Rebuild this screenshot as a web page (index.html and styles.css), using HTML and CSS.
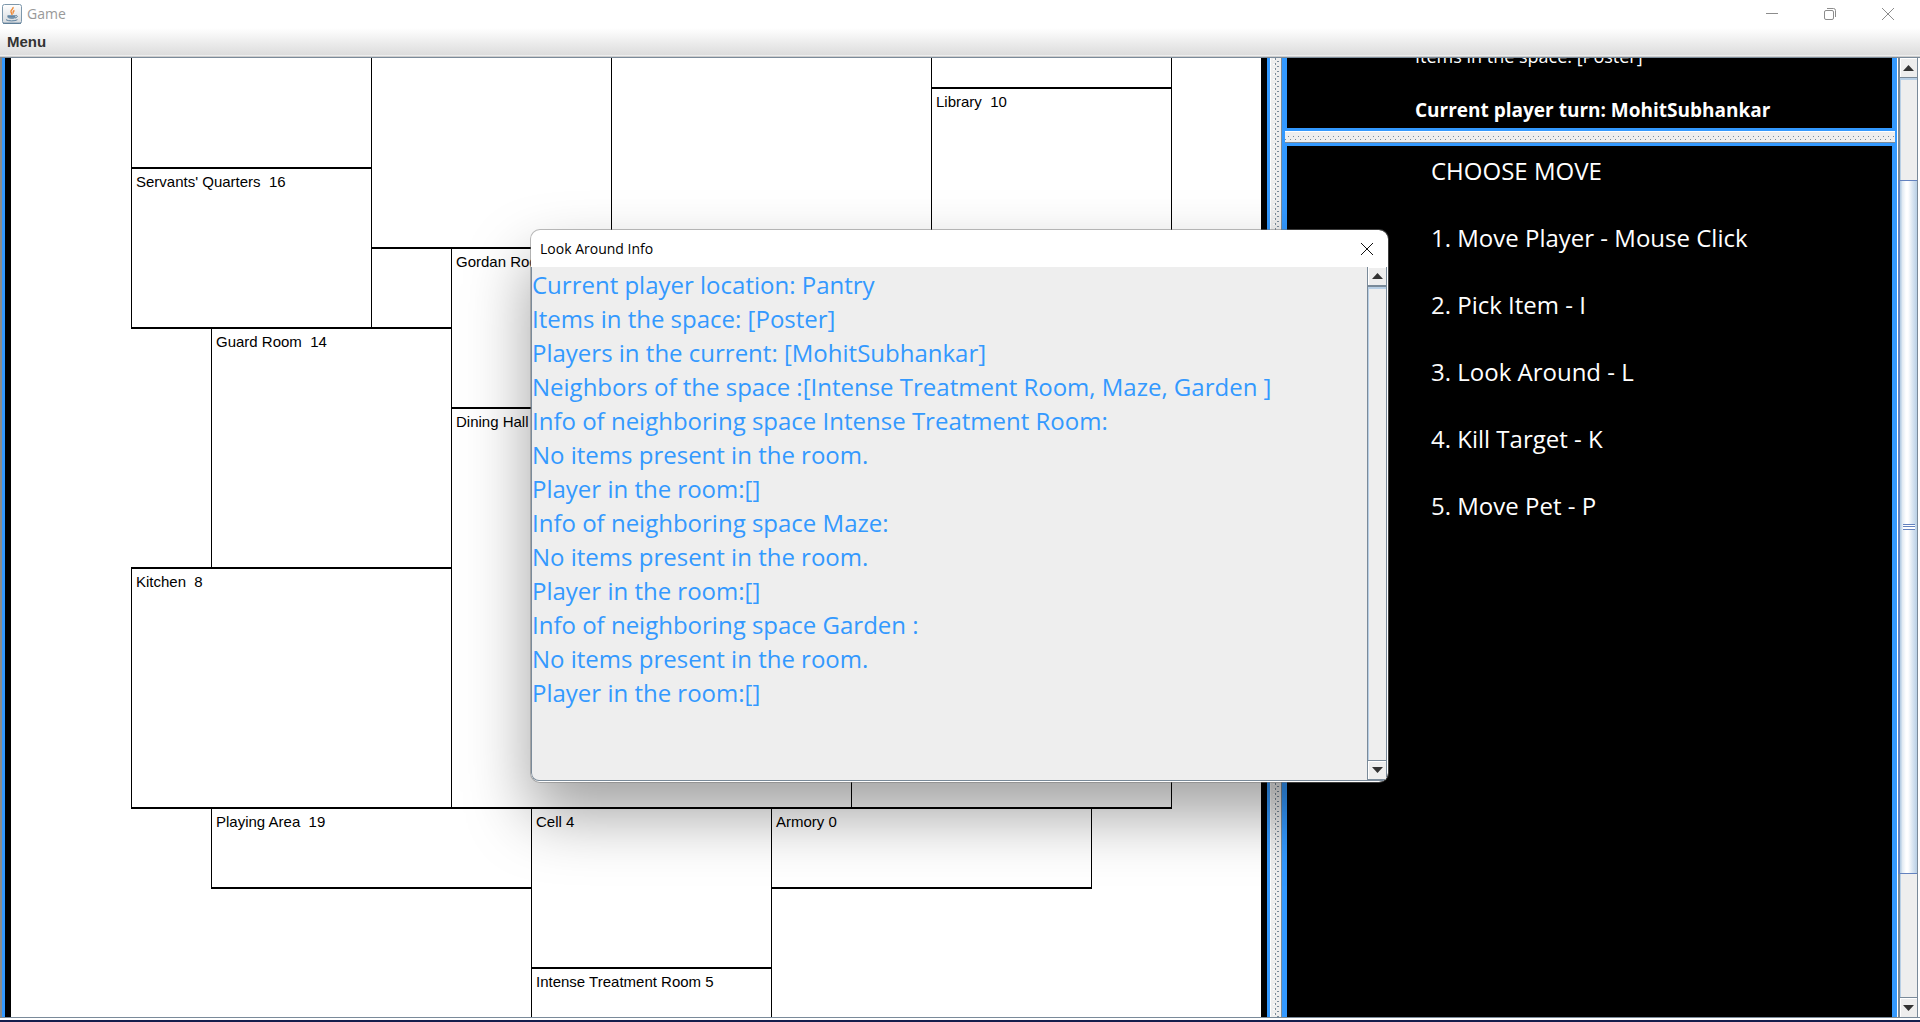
FILE: index.html
```html
<!DOCTYPE html>
<html lang="en">
<head>
<meta charset="utf-8">
<title>Game</title>
<link rel="stylesheet" href="styles.css">
</head>
<body>
<div class="window">
  <header class="titlebar">
    <svg class="java-icon" viewBox="0 0 20 20" width="20" height="20" aria-hidden="true">
      <defs><linearGradient id="tile" x1="0" y1="0" x2="0" y2="1"><stop offset="0" stop-color="#fff"/><stop offset="1" stop-color="#d5d9dd"/></linearGradient></defs>
      <rect x=".5" y=".5" width="19" height="19" rx="2" fill="url(#tile)" stroke="#7d97ab"/>
      <path d="M1 19.2h18" stroke="#4f7390"/>
      <path d="M11 3c1 2-3 3-2 5 .4 1 1.200 1.500 1 3M12.500 6.500c-2 1-1.500 2 -1 3" fill="none" stroke="#ee8a3a" stroke-width="1.400"/>
      <path d="M5.500 11h8v1.500c0 2-1.500 2.500-4 2.500s-4-1-4-2.500z" fill="#7f9bb3"/>
      <path d="M13.500 11.500c2.500-.5 2.500 2-.5 2.500M4 15.700c2 1.600 9 1.600 11.500 0M5.500 12.800h7.500" fill="none" stroke="#5b7f9d"/>
    </svg>
    <span class="titlebar__text">Game</span>
    <div class="titlebar__buttons">
      <button class="caption-button" aria-label="Minimize"><svg viewBox="0 0 14 14" width="14" height="14"><path d="M1 6.500h12"/></svg></button>
      <button class="caption-button" aria-label="Restore"><svg viewBox="0 0 14 14" width="14" height="14"><rect x="1.500" y="3.500" width="9" height="9" rx="1.500"/><path d="M4 1.500h6.500a2 2 0 0 1 2 2V10"/></svg></button>
      <button class="caption-button" aria-label="Close"><svg viewBox="0 0 14 14" width="14" height="14"><path d="M1 1l12 12M13 1L1 13"/></svg></button>
    </div>
  </header>
  <nav class="menubar"><button class="menubar__item">Menu</button></nav>

  <main class="workspace">
    <section class="map" aria-label="World map">
      <div class="board">
        <div class="room room--open a1"></div>
        <div class="room room--open a2"></div>
        <div class="room room--open a3"></div>
        <div class="room passage"></div>
        <div class="room library">Library  10</div>
        <div class="room servants">Servants' Quarters  16</div>
        <div class="room gordan">Gordan Room</div>
        <div class="room guard">Guard Room  14</div>
        <div class="room dining">Dining Hall</div>
        <div class="room pantry"></div>
        <div class="room kitchen">Kitchen  8</div>
        <div class="room playing">Playing Area  19</div>
        <div class="room armory">Armory 0</div>
        <div class="room cell">Cell 4</div>
        <div class="room treatment">Intense Treatment Room 5</div>
      </div>
    </section>
    <div class="divider divider--vertical"></div>
    <aside class="side">
      <section class="status">
        <p>Items in the space: [Poster]</p>
        <p class="status__turn">Current player turn: MohitSubhankar</p>
      </section>
      <div class="divider divider--horizontal"></div>
      <section class="moves">
        <p>CHOOSE MOVE</p>
        <p>1. Move Player - Mouse Click</p>
        <p>2. Pick Item - I</p>
        <p>3. Look Around - L</p>
        <p>4. Kill Target - K</p>
        <p>5. Move Pet - P</p>
      </section>
    </aside>
    <div class="scrollbar">
      <button class="scrollbar__button" aria-label="Scroll up"><svg viewBox="0 0 11 6" width="11" height="6"><path d="M0 6L5.500 0 11 6z"/></svg></button>
      <div class="scrollbar__track">
        <div class="scrollbar__before"></div>
        <div class="scrollbar__thumb"><span class="grip"></span></div>
        <div class="scrollbar__after"></div>
      </div>
      <button class="scrollbar__button scrollbar__button--down" aria-label="Scroll down"><svg viewBox="0 0 11 6" width="11" height="6"><path d="M0 0L5.500 6 11 0z"/></svg></button>
    </div>
  </main>

  <div class="dialog" role="dialog" aria-labelledby="dialog-title">
    <div class="dialog__title">
      <span id="dialog-title">Look Around Info</span>
      <button class="dialog__close" aria-label="Close dialog"><svg viewBox="0 0 14 14" width="14" height="14"><path d="M1 1l12 12M13 1L1 13"/></svg></button>
    </div>
    <div class="dialog__body">
      <div class="dialog__text">
        <p>Current player location: Pantry</p>
        <p>Items in the space: [Poster]</p>
        <p>Players in the current: [MohitSubhankar]</p>
        <p>Neighbors of the space :[Intense Treatment Room, Maze, Garden ]</p>
        <p>Info of neighboring space Intense Treatment Room:</p>
        <p>No items present in the room.</p>
        <p>Player in the room:[]</p>
        <p>Info of neighboring space Maze:</p>
        <p>No items present in the room.</p>
        <p>Player in the room:[]</p>
        <p>Info of neighboring space Garden :</p>
        <p>No items present in the room.</p>
        <p>Player in the room:[]</p>
      </div>
      <div class="scrollbar scrollbar--dialog">
        <button class="scrollbar__button" aria-label="Scroll text up"><svg viewBox="0 0 11 6" width="11" height="6"><path d="M0 6L5.500 0 11 6z"/></svg></button>
        <div class="scrollbar__track"></div>
        <button class="scrollbar__button scrollbar__button--down" aria-label="Scroll text down"><svg viewBox="0 0 11 6" width="11" height="6"><path d="M0 0L5.500 6 11 0z"/></svg></button>
      </div>
    </div>
  </div>
</div>
</body>
</html>
```
FILE: styles.css
```css
:root {
  --blue: #3399ff;
  --steel: #7a8a99;
  --face: #eeeeee;
  --ui: "Open Sans", "Noto Sans", sans-serif;
}

* { box-sizing: border-box; }

body {
  margin: 0;
  font-family: var(--ui);
  background: #fff;
}

p { margin: 0; }

button {
  padding: 0;
  border: 0;
  background: none;
  font: inherit;
}

.window {
  position: relative;
  display: flex;
  flex-direction: column;
  height: 100vh;
  overflow: hidden;
  border-bottom: 2px solid #141c4c;
}

/* Title bar and menu */
.titlebar {
  display: flex;
  align-items: center;
  flex: none;
  height: 28px;
  padding: 0 3px 0 2px;
  gap: 5px;
}

.titlebar__text {
  font-size: 14px;
  line-height: 20px;
  color: #999;
}

.titlebar__buttons {
  display: flex;
  margin-left: auto;
}

.caption-button {
  display: grid;
  place-items: center;
  width: 58px;
  height: 28px;
}

.caption-button svg,
.dialog__close svg {
  fill: none;
  stroke: #8c8c8c;
}

.menubar {
  flex: none;
  height: 30px;
  border-bottom: 1px solid var(--steel);
  box-shadow: inset 0 -1px #ccc, inset 0 -2px #eee;
  background: linear-gradient(#fff, #dadada);
}

.menubar__item {
  height: 28px;
  padding-left: 7px;
  font: bold 15px/28px "Liberation Sans", Arial, sans-serif;
  color: #333;
}

/* Split layout */
.workspace {
  display: flex;
  flex: 1;
  min-height: 0;
  margin-bottom: 2px;
  padding-left: 2px;
  border-bottom: 1px solid var(--steel);
  background: linear-gradient(90deg, #8c8c8c 2px, #fff 2px);
}

.map {
  flex: 1250 1 0;
  min-width: 0;
  overflow: hidden;
  padding: 0 6px;
  border: solid var(--blue);
  border-width: 0 3px;
  background: #000;
}

.board {
  display: grid;
  grid-template-columns: repeat(13, 80px);
  grid-template-rows: 29px repeat(12, 80px);
  height: 100%;
  padding-left: 120px;
  overflow: hidden;
  background: #fff;
}

.room {
  margin: 0 -1px -2px 0;
  padding: 3px 4px;
  border: solid #000;
  border-width: 2px 1px;
  font: 15px/20px "Liberation Sans", Arial, sans-serif;
  white-space: pre;
  color: #000;
}

.room--open { border-top: 0; }

.a1 { grid-area: 1 / 1 / 3 / 4; }
.a2 { grid-area: 1 / 4 / 4 / 7; }
.a3 { grid-area: 1 / 11 / 2 / 14; }
.passage { grid-area: 4 / 4 / 5 / 5; }
.library { grid-area: 2 / 11 / 6 / 14; }
.servants { grid-area: 3 / 1 / 5 / 4; }
.gordan { grid-area: 4 / 5 / 6 / 8; }
.guard { grid-area: 5 / 2 / 8 / 5; }
.dining { grid-area: 6 / 5 / 11 / 10; }
.pantry { grid-area: 8 / 10 / 11 / 14; }
.kitchen { grid-area: 8 / 1 / 11 / 5; }
.playing { grid-area: 11 / 2 / 12 / 6; }
.armory { grid-area: 11 / 9 / 12 / 13; }
.cell { grid-area: 11 / 6 / 13 / 9; }
.treatment { grid-area: 13 / 6 / 14 / 9; }

.divider {
  flex: none;
  background-color: var(--face);
}

.divider--vertical {
  width: 11px;
  border-left: 1px solid #fff;
  background-image:
    linear-gradient(#fff 1px, transparent 1px),
    linear-gradient(var(--steel) 2px, transparent 2px),
    linear-gradient(var(--steel) 1px, transparent 1px);
  background-size: 2px 5px, 1px 5px, 2px 5px;
  background-position: 2px 1px, 4px 0, 6px 3px;
  background-repeat: repeat-y;
}

.divider--horizontal {
  height: 12px;
  border-top: 1px solid #fff;
  border-bottom: 1px solid var(--steel);
  background-image:
    linear-gradient(90deg, var(--steel) 1px, transparent 1px),
    linear-gradient(90deg, var(--steel) 1px, transparent 1px);
  background-size: 5px 1px;
  background-position: 3px 4px, 5px 7px;
  background-repeat: repeat-x;
}

.side {
  display: flex;
  flex-direction: column;
  flex: 610 1 0;
  min-width: 0;
  border-left: 1px solid var(--steel);
  border-right: 2px solid var(--blue);
  box-shadow: inset 3px 0 var(--blue);
  padding-left: 3px;
}

.status,
.moves {
  overflow: hidden;
  border: solid var(--blue);
  color: #fff;
  background: #000;
}

.status {
  display: flex;
  flex: 0 0 73px;
  flex-direction: column;
  justify-content: flex-end;
  gap: 27px;
  padding: 0 0 4px 128px;
  border-width: 0 3px 3px 2px;
  font-size: 18px;
  line-height: 27px;
}

.status__turn {
  font-size: 19px;
  font-weight: bold;
}

.moves {
  display: flex;
  flex: 1;
  flex-direction: column;
  gap: 33px;
  padding: 8px 0 0 144px;
  border-width: 3px 3px 0 2px;
  font-size: 24px;
  line-height: 34px;
}

/* Scroll bars */
.scrollbar {
  display: flex;
  flex: none;
  flex-direction: column;
  width: 23px;
  padding-right: 2px;
  border-left: 1px solid #fff;
}

.scrollbar__button {
  display: grid;
  flex: none;
  place-items: center;
  height: 20px;
  border: solid var(--steel);
  border-width: 0 1px 1px 2px;
  box-shadow: inset 1px 1px #fff;
  background: var(--face);
}

.scrollbar__button svg { fill: #333; }

.scrollbar__button--down { border-width: 1px 1px 0 2px; }

.scrollbar__track {
  display: flex;
  flex: 1;
  flex-direction: column;
  border: solid var(--steel);
  border-width: 0 1px 0 2px;
  background: var(--face);
  box-shadow: inset 1px 2px #b8cfe5;
}

.scrollbar__before { flex: 102; }
.scrollbar__after { flex: 123; }

.scrollbar__thumb {
  display: grid;
  flex: 695;
  place-items: center;
  margin-left: -2px;
  border: solid #6382bf;
  border-width: 1px 0 1px 2px;
  background: linear-gradient(90deg, #b8cfe5 1px, #dfe9f2 2px, #fff 6px, #fff 8px, #dde8f3 12px, #b8cfe5);
}

.grip {
  width: 12px;
  height: 6px;
  background: linear-gradient(#6382bf 1px, #fff 1px 2px, #6382bf 2px 3px, #fff 3px 5px, #6382bf 5px);
}

.scrollbar--dialog {
  width: 20px;
  padding: 0;
  border: 0;
}

.scrollbar--dialog .scrollbar__track { border-left-width: 1px; }
.scrollbar--dialog .scrollbar__button { border-width: 0 1px 2px 1px; }
.scrollbar--dialog .scrollbar__button--down { border-width: 1px; }

/* Floating dialog */
.dialog {
  position: absolute;
  top: 229px;
  left: 530px;
  display: flex;
  flex-direction: column;
  width: 859px;
  overflow: hidden;
  border: 1px solid rgba(120, 120, 120, 0.5);
  border-radius: 10px;
  background: #fff padding-box;
  box-shadow: 0 32px 64px rgba(0, 0, 0, 0.37);
}

.dialog__title {
  display: flex;
  align-items: center;
  justify-content: space-between;
  height: 37px;
  padding: 0 14px 0 9px;
  font-size: 14px;
  line-height: 20px;
  color: #000;
}

.dialog__close { height: 14px; }
.dialog__close svg { display: block; stroke: #111; }

.dialog__body {
  display: flex;
  height: 514px;
  margin-right: 1px;
  margin-bottom: 1px;
  border: solid var(--steel);
  border-width: 0 0 1px 1px;
  border-bottom-left-radius: 8px;
  background: var(--face);
}

.dialog__text {
  flex: 1;
  padding-top: 1px;
  font-size: 24px;
  line-height: 34px;
  color: var(--blue);
}
```
